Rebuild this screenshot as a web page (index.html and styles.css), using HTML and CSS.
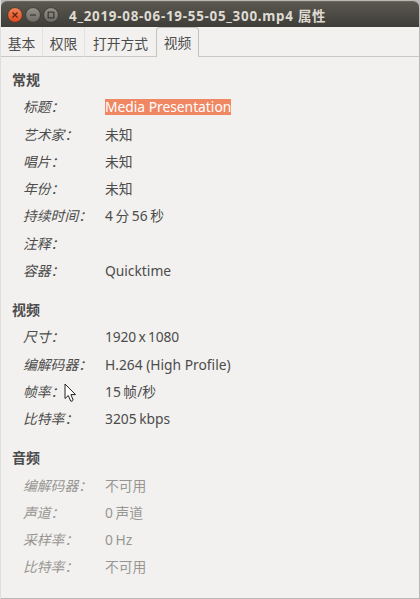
FILE: index.html
```html
<!DOCTYPE html>
<html lang="zh-CN">
<head>
    <meta charset="UTF-8">
    <title>4_2019-08-06-19-55-05_300.mp4 属性</title>
    <link rel="stylesheet" href="styles.css">
</head>
<body>
    <div class="window">
        <div class="titlebar">
            <svg class="controls" width="52" height="18" viewBox="0 0 52 18">
                <defs>
                    <linearGradient id="orange" x1="0" y1="0" x2="0" y2="1">
                        <stop offset="0" stop-color="#f5835b"/>
                        <stop offset="1" stop-color="#dc4a1c"/>
                    </linearGradient>
                    <linearGradient id="grey" x1="0" y1="0" x2="0" y2="1">
                        <stop offset="0" stop-color="#969489"/>
                        <stop offset="1" stop-color="#6b6962"/>
                    </linearGradient>
                </defs>
                <g stroke="#35342f" stroke-width="0.8">
                    <circle cx="8" cy="9" r="7.4" fill="url(#orange)"/>
                    <circle cx="26" cy="9" r="7.4" fill="url(#grey)"/>
                    <circle cx="44" cy="9" r="7.4" fill="url(#grey)"/>
                </g>
                <g fill="none" stroke="#3c3b37" stroke-width="1.3">
                    <path d="M5.5 6.5l5 5M10.5 6.5l-5 5" stroke="#622512"/>
                    <path d="M23 9h6"/>
                    <path d="M41.2 6.2h5.6v5.6h-5.6z"/>
                </g>
            </svg>
            <div class="title">4_2019-08-06-19-55-05_300.mp4 属性</div>
        </div>

        <div class="tabs">
            <div class="tab">基本</div>
            <div class="tab">权限</div>
            <div class="tab tab-wide">打开方式</div>
            <div class="tab active">视频</div>
            <div class="tabs-rest"></div>
        </div>

        <div class="content">
            <h2>常规</h2>
            <dl>
                <dt>标题：</dt><dd><span class="selected">Media Presentation</span></dd>
                <dt>艺术家：</dt><dd>未知</dd>
                <dt>唱片：</dt><dd>未知</dd>
                <dt>年份：</dt><dd>未知</dd>
                <dt>持续时间：</dt><dd class="number">4 分 56 秒</dd>
                <dt>注释：</dt><dd></dd>
                <dt>容器：</dt><dd>Quicktime</dd>
            </dl>
            <h2>视频</h2>
            <dl>
                <dt>尺寸：</dt><dd class="number size">1920 x 1080</dd>
                <dt>编解码器：</dt><dd>H.264 (High Profile)</dd>
                <dt>帧率：</dt><dd class="number">15 帧/秒</dd>
                <dt>比特率：</dt><dd class="number">3205 kbps</dd>
            </dl>
            <h2>音频</h2>
            <dl class="disabled">
                <dt>编解码器：</dt><dd>不可用</dd>
                <dt>声道：</dt><dd class="number">0 声道</dd>
                <dt>采样率：</dt><dd class="number">0 Hz</dd>
                <dt>比特率：</dt><dd>不可用</dd>
            </dl>
        </div>
    </div>

    <svg class="cursor" width="13" height="20" viewBox="0 0 13 20">
        <path d="M1 1v14.5l3.3-3 2.4 5.6q1.6.5 2.5-1L6.9 11.6h4.6z" fill="#fff" stroke="#222" stroke-width="1"/>
    </svg>
</body>
</html>
```
FILE: styles.css
```css
body {
    margin: 0;
    background-color: #b9b8b6;
    font-family: "Noto Sans", "Noto Sans CJK SC", sans-serif;
    font-size: 13.8px;
    color: #4c4c4c;
}
.window {
    box-sizing: border-box;
    height: 599px;
    padding: 1px 1px 1px 0;
    border-left: 1px solid #dededc;
    overflow: hidden;
}
.titlebar {
    display: flex;
    align-items: center;
    box-sizing: border-box;
    height: 26px;
    padding-left: 6px;
    border-radius: 6px 6px 0 0;
    background: linear-gradient(#5a584f, #3e3d39);
    border-top: 1px solid #69675e;
}
.controls {
    flex: none;
}
.title {
    margin-left: 10px;
    font-size: 13.4px;
    font-weight: bold;
    line-height: 20px;
    letter-spacing: 0.74px;
    color: #dfdbd2;
    white-space: nowrap;
    padding-top: 2px;
}
.tabs {
    display: flex;
    box-sizing: border-box;
    height: 30px;
    background-color: #f2f1ef;
    line-height: 20px;
}
.tab {
    box-sizing: border-box;
    width: 42px;
    padding-top: 7px;
    border-right: 1px solid #e4e3e1;
    border-bottom: 1px solid #cbc9c6;
    text-align: center;
    white-space: nowrap;
}
.tab-wide {
    width: 71px;
    border-right: none;
}
.tab.active {
    width: 43px;
    padding-top: 5px;
    border: 1px solid #c4c2bf;
    border-bottom: none;
    border-radius: 4px 4px 0 0;
}
.tabs-rest {
    flex: 1;
    border-bottom: 1px solid #cbc9c6;
}
.content {
    box-sizing: border-box;
    height: 541px;
    padding: 13px 0 0 11px;
    background-color: #f2f1ef;
    overflow: hidden;
}
h2 {
    margin: 0;
    height: 23.3px;
    font-size: 14px;
    line-height: 20px;
}
dl {
    display: grid;
    grid-template-columns: 82px 1fr;
    grid-auto-rows: 27.3px;
    margin: 0 0 15.7px 11px;
    line-height: 27.3px;
    white-space: nowrap;
}
dt {
    font-style: italic;
}
dd {
    margin: 0;
}
.selected {
    display: inline-block;
    height: 16px;
    line-height: 16px;
    background-color: #f08763;
    color: #fff;
}
.number {
    word-spacing: -1px;
}
.size {
    letter-spacing: -0.15px;
}
.disabled {
    color: #979693;
}
.cursor {
    position: absolute;
    left: 64px;
    top: 383px;
}
```
